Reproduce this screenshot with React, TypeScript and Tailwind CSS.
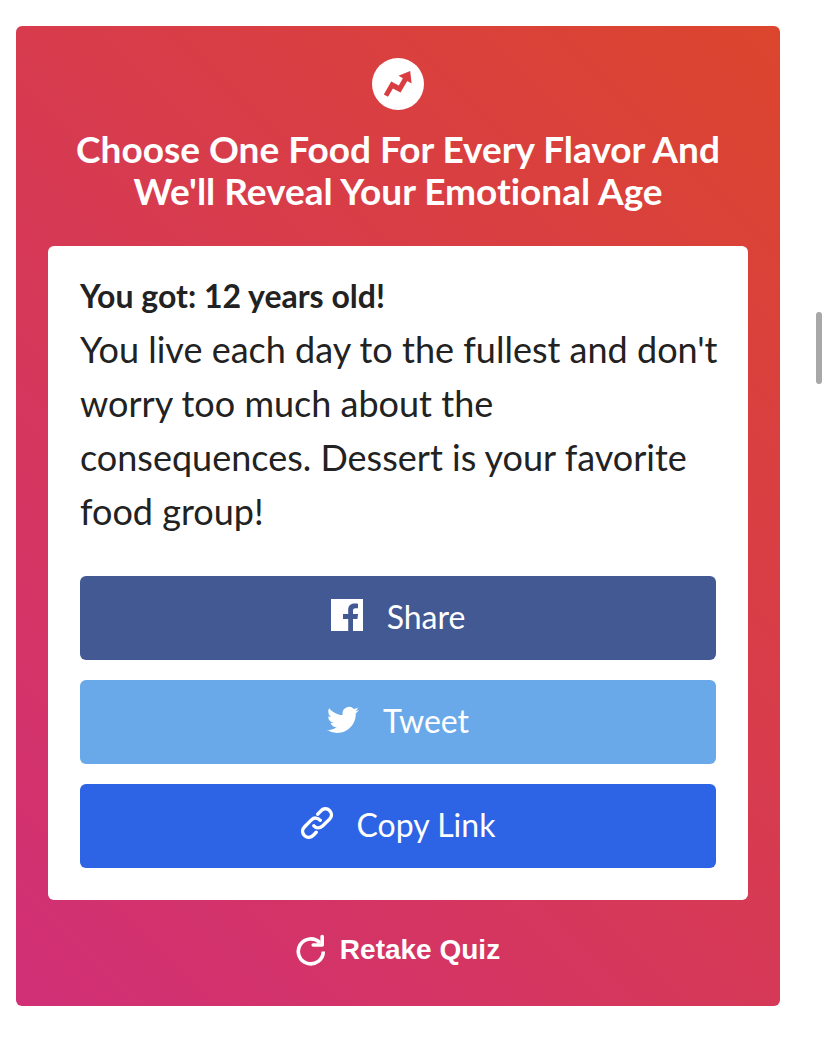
import type { ReactNode } from 'react';

function TrendLogo() {
  return (
    <svg viewBox="0 0 52 52" className="h-13 w-13" aria-hidden="true">
      <circle cx="26" cy="26" r="26" fill="#fff" />
      <path
        fill="#d93d42"
        d="M38.2 13 L39.6 25.4 L35.3 22.900 L28.5 34.4 L20.900 30.6 L16 38.8 L11.8 36.4 L19.2 23.6 L26.8 27.600 L30.900 20.200 L26.5 17.7 Z"
      />
    </svg>
  );
}

function FacebookIcon() {
  return (
    <svg viewBox="0 0 32 32" className="h-8 w-8" fill="#fff" aria-hidden="true">
      <path d="M0 0h32v32H22V20h4.400l.7-5H22v-3.200c0-1.700.8-2.500 2.500-2.500H27V4.800c-1-.2-2.200-.3-3.500-.3-4 0-6.300 2.300-6.300 6.300V15H12v5h5.200v12H0z" />
    </svg>
  );
}

function TwitterIcon() {
  return (
    <svg viewBox="0 -0.75 24 24" className="h-8 w-8" fill="#fff" aria-hidden="true">
      <path d="M23.953 4.570a10 10 0 01-2.825.775 4.958 4.958 0 002.163-2.723c-.951.555-2.005.959-3.127 1.184a4.920 4.920 0 00-8.384 4.482C7.690 8.095 4.067 6.130 1.640 3.162a4.822 4.822 0 00-.666 2.475c0 1.710.870 3.213 2.188 4.096a4.904 4.904 0 01-2.228-.616v.060a4.923 4.923 0 003.946 4.827 4.996 4.996 0 01-2.212.085 4.936 4.936 0 004.604 3.417 9.867 9.867 0 01-6.102 2.105c-.390 0-.779-.023-1.170-.067a13.995 13.995 0 007.557 2.209c9.053 0 13.998-7.496 13.998-13.985 0-.210 0-.420-.015-.630A9.935 9.935 0 0024 4.590z" />
    </svg>
  );
}

function LinkIcon() {
  return (
    <svg
      viewBox="0 0 32 32"
      className="h-8 w-8"
      fill="none"
      stroke="#fff"
      strokeWidth="3.400"
      strokeLinecap="round"
      aria-hidden="true"
    >
      <path d="M16.800 7.200 L19.700 4.100 C22 1.300 26 1 28.500 3.400 C31 5.900 31 9.600 28.600 12.100 L21.500 19 C18.700 21.500 15.400 21.500 12.900 18.800" />
      <path d="M19.300 13.300 C16.700 10.400 13 10.400 10.400 12.900 L3.400 20 C1 22.500 1.100 26.200 3.500 28.600 C6 31 9.800 30.900 12.300 28.300 L15.200 25.300" />
    </svg>
  );
}

function RetakeIcon() {
  return (
    <svg
      viewBox="0 0 30 32"
      className="h-8 w-[30px]"
      fill="none"
      stroke="#fff"
      strokeWidth="3.600"
      strokeLinecap="round"
      strokeLinejoin="round"
      aria-hidden="true"
    >
      <path strokeLinecap="butt" d="M27.300 17.500 A12.500 12.500 0 1 1 24 8.900" />
      <path d="M26.200 2.600 V11 H17.200" />
    </svg>
  );
}

interface ShareButtonProps {
  icon: ReactNode;
  label: string;
  className: string;
}

function ShareButton({ icon, label, className }: ShareButtonProps) {
  return (
    <button
      type="button"
      className={`flex h-21 w-full cursor-pointer items-center justify-center gap-6 rounded-md pb-0.5 text-[32px] leading-9 text-white ${className}`}
    >
      <span className="pb-1">{icon}</span>
      {label}
    </button>
  );
}

export default function App() {
  return (
    <main className="bg-white py-[26px] pr-12 pl-4 font-['Lato',sans-serif] [font-variant-ligatures:none]">
      <section className="flex flex-col items-center rounded-md bg-linear-[45deg,#d12f77,#dc452d] px-8 pt-8 pb-10">
        <TrendLogo />
        <h1 className="mt-[18px] text-center text-[37px] leading-[42px] font-bold text-white">
          Choose One Food For Every Flavor And We'll Reveal Your Emotional Age
        </h1>

        {/* Result card */}
        <div className="mt-[34px] w-full rounded-md bg-white p-8 text-[#222]">
          <h2 className="text-[32px] leading-9 font-bold">You got: 12 years old!</h2>
          <p className="-mr-2 mt-2 text-[36px] leading-[54px]">
            You live each day to the fullest and don't worry too much about the consequences. Dessert is your
            favorite food group!
          </p>

          <div className="mt-[38px] flex flex-col gap-5">
            <ShareButton icon={<FacebookIcon />} label="Share" className="bg-[#425993]" />
            <ShareButton icon={<TwitterIcon />} label="Tweet" className="bg-[#6aa9e9]" />
            <ShareButton icon={<LinkIcon />} label="Copy Link" className="bg-[#2d63e5]" />
          </div>
        </div>

        <button
          type="button"
          className="mt-[34px] flex cursor-pointer items-center gap-3.5 font-['Liberation_Sans',sans-serif] text-[28px] leading-8 font-bold text-white"
        >
          <RetakeIcon />
          Retake Quiz
        </button>
      </section>

      {/* Overlay scroll thumb */}
      <div className="fixed top-78 right-1.5 h-18 w-1.5 rounded-full bg-[#a8a8a8]" aria-hidden="true" />
    </main>
  );
}
